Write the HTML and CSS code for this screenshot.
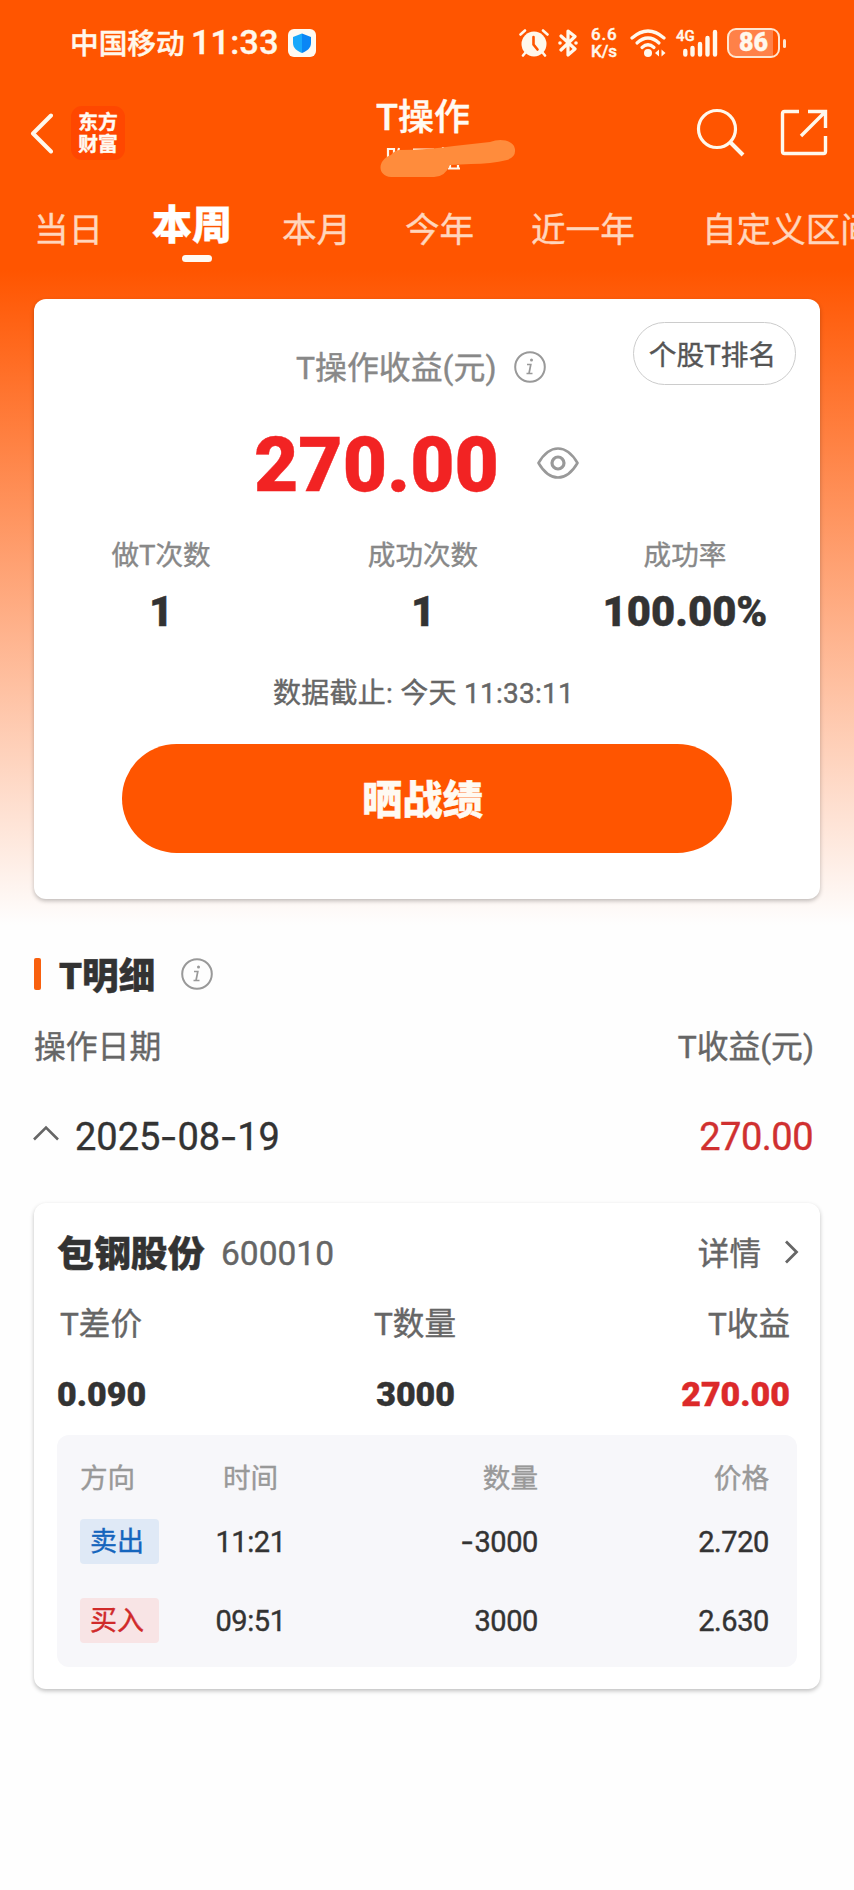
FILE: index.html
```html
<!DOCTYPE html>
<html lang="zh-CN">
<head>
<meta charset="utf-8">
<title>T操作</title>
<link rel="stylesheet" href="styles.css">
</head>
<body>
<div class="page">
  <div class="status">
    <span class="carrier">中国移动</span>
    <span class="clock">11:33</span>
    <svg class="shield" width="28" height="28" viewBox="0 0 28 28"><rect width="28" height="28" rx="6" fill="#fffaf2"/><path d="M14 4.500 23 8v6c0 5-4 8-9 10z" fill="#0a86f5"/><path d="M14 4.500 5 8v6c0 5 4 8 9 10z" fill="#18a8fb"/></svg>
    <div class="status-right">
      <svg class="alarm" width="30" height="28" viewBox="0 0 30 28"><circle cx="15" cy="15" r="12.500" fill="#fff8ec"/><g stroke="#fff8ec" stroke-width="2.600" stroke-linecap="round" fill="none"><path d="M1.500 5.500 6 1.500M28.500 5.500 24 1.500M6.500 23.500 4 26.500M23.500 23.500 26 26.500"/></g><path d="M14.500 8v7.500l4 5" stroke="#ff5500" stroke-width="2.600" fill="none" stroke-linecap="round"/></svg>
      <svg class="bt" width="20" height="28" viewBox="0 0 20 28"><path d="M3 7 17 20 10 26V2l7 5.500L3 21" fill="none" stroke="#fff8ec" stroke-width="3.200" stroke-linejoin="round" stroke-linecap="round"/><circle cx="2" cy="14" r="1.800" fill="#fff8ec"/><circle cx="18" cy="14" r="1.800" fill="#fff8ec"/></svg>
      <div class="speed"><span class="rate">6.6</span><span>K/s</span></div>
      <svg class="wifi" width="37" height="28" viewBox="0 0 37 28"><g fill="none" stroke="#fff8ec" stroke-width="3.200" stroke-linecap="round"><path d="M2 9Q18 -5 34 9"/><path d="M7 14Q18 4 29 14"/><path d="M12 18.500Q18 13 24 18.500"/></g><circle cx="18" cy="24" r="4" fill="#fff8ec"/><path d="M29 20.500v7l-4-3.500zM31.500 20.500v7l4-3.500z" fill="#fff8ec"/></svg>
      <div class="signal"><span class="net">4G</span><svg width="35" height="28" viewBox="0 0 35 28"><g stroke="#fff8ec" stroke-width="4.400" stroke-linecap="round"><path d="M2.300 22v3.500M9.500 19v6.500M17 15v10.500M24.500 9v16.500M32 3v22.500"/></g></svg></div>
      <div class="battery"><span>86</span></div><i class="nub"></i>
    </div>
  </div>

  <div class="nav">
    <svg class="back" width="24" height="44" viewBox="0 0 24 44"><path d="M22 4.500 4 22.500 22 40.500" fill="none" stroke="#fff8ec" stroke-width="4" stroke-linecap="round" stroke-linejoin="round"/></svg>
    <div class="logo"><span>东方</span><span>财富</span></div>
    <div class="heading">
      <div class="title">T操作</div>
      <svg class="smudge" width="145" height="40" viewBox="0 0 145 40"><path d="M12 16V8h6v6M21 14l2-7M37 8.500h21M67 6v4M72 27.500h12M74 27v-3M82 27v-3" stroke="#fff8ec" stroke-width="2.200" fill="none"/><path d="M15 36C1 35 1 19 15 14Q19 9 24 9Q50 9 78 5L114 1C124-3 134-1 138 5Q142 15 131 19Q115 23 95 23L74 24Q69 36 58 36Z" fill="#ff8c3c"/></svg>
    </div>
    <svg class="search" width="50" height="50" viewBox="0 0 50 50"><circle cx="21" cy="21" r="18.500" fill="none" stroke="#fff8ec" stroke-width="3.200"/><path d="M34 34 47 47" stroke="#fff8ec" stroke-width="4"/></svg>
    <svg class="share" width="48" height="48" viewBox="0 0 48 48"><path d="M19 2.500H4.500q-2 0-2 2v38q0 2 2 2h39q2 0 2-2V27M28 2.500H45.500V19M45 3 21 27" fill="none" stroke="#fff8ec" stroke-width="3.400"/></svg>
  </div>

  <div class="tabs">
    <span class="tab">当日</span>
    <span class="tab active">本周</span>
    <span class="tab t3">本月</span>
    <span class="tab t4">今年</span>
    <span class="tab t5">近一年</span>
    <span class="tab t6">自定义区间</span>
  </div>

  <div class="card summary">
    <div class="rank">个股T排名</div>
    <div class="sum-title"><span>T操作收益(元)</span><svg width="32" height="32" viewBox="0 0 32 32"><circle cx="16" cy="16" r="14.800" fill="none" stroke="#999" stroke-width="2"/><circle cx="17.500" cy="9" r="1.500" fill="#999"/><path d="M13 13.500h3.800L15 22.500h3.500M12.500 22.500H16" fill="none" stroke="#999" stroke-width="1.700"/></svg></div>
    <div class="amount"><span>270.00</span><svg width="42" height="32" viewBox="0 0 42 32"><path d="M1.500 16Q10 1.500 21 1.500T40.500 16Q32 30.500 21 30.500T1.500 16Z" fill="none" stroke="#999" stroke-width="2.600" stroke-linejoin="round"/><circle cx="21" cy="16" r="6" fill="none" stroke="#999" stroke-width="3.200"/></svg></div>
    <div class="stats">
      <div><span class="k">做T次数</span><span class="v">1</span></div>
      <div><span class="k">成功次数</span><span class="v">1</span></div>
      <div><span class="k">成功率</span><span class="v">100.00%</span></div>
    </div>
    <div class="asof">数据截止: 今天 11:33:11</div>
    <div class="button">晒战绩</div>
  </div>

  <div class="section-head"><i></i><span>T明细</span><svg width="32" height="32" viewBox="0 0 32 32"><circle cx="16" cy="16" r="14.800" fill="none" stroke="#999" stroke-width="2"/><circle cx="17.500" cy="9" r="1.500" fill="#999"/><path d="M13 13.500h3.800L15 22.500h3.500M12.500 22.500H16" fill="none" stroke="#999" stroke-width="1.700"/></svg></div>
  <div class="cols"><span>操作日期</span><span>T收益(元)</span></div>
  <div class="day"><svg width="26" height="16" viewBox="0 0 26 16"><path d="M1 14.500 13 2.500 25 14.500" fill="none" stroke="#666" stroke-width="2.600"/></svg><span class="date">2025<b>-</b>08<b>-</b>19</span><span class="profit">270.00</span></div>

  <div class="card detail">
    <div class="stock"><span class="name">包钢股份</span><span class="code">600010</span><span class="more">详情</span><svg width="16" height="26" viewBox="0 0 16 26"><path d="M3 2.500 13.500 13 3 23.500" fill="none" stroke="#666" stroke-width="2.800"/></svg></div>
    <div class="trio keys"><span>T差价</span><span>T数量</span><span>T收益</span></div>
    <div class="trio vals"><span>0.090</span><span>3000</span><span class="red">270.00</span></div>
    <div class="trades">
      <div class="row head"><span>方向</span><span>时间</span><span>数量</span><span>价格</span></div>
      <div class="row"><span><em class="sell">卖出</em></span><span>11:21</span><span><b>-</b>3000</span><span>2.720</span></div>
      <div class="row"><span><em class="buy">买入</em></span><span>09:51</span><span>3000</span><span>2.630</span></div>
    </div>
  </div>
</div>
</body>
</html>
```
FILE: styles.css
```css
* { box-sizing: border-box; }
body {
  margin: 0;
  font-family: Roboto, "Noto Sans CJK SC", sans-serif;
  color: #333;
  background: #fefefe;
  -webkit-text-stroke: .4px currentColor;
}
svg { display: block; flex: none; -webkit-text-stroke: 0; }
.page {
  width: 854px;
  height: 1890px;
  overflow: hidden;
  background: linear-gradient(#ff5500 270px, #fefefe 925px);
}
.status {
  display: flex;
  align-items: center;
  height: 86px;
  padding-left: 70px;
  color: #fff8ec;
}
.carrier { width: 121px; padding-bottom: 3px; font-size: 28.7px; font-weight: 500; }
.clock { width: 97px; padding-bottom: 2px; font-size: 34px; font-weight: 500; letter-spacing: .3px; }
.status-right { display: flex; align-items: center; margin-left: 203px; }
.bt { margin-left: 9px; }
.speed {
  display: flex;
  flex-direction: column;
  width: 29px;
  margin-left: 13px;
  font-size: 17px;
  line-height: 17px;
  font-weight: 500;
}
.rate { letter-spacing: .8px; }
.wifi { margin-left: 10px; }
.signal { display: flex; position: relative; width: 42px; margin-left: 9px; justify-content: flex-end; }
.net { position: absolute; left: 0; top: 0; font-size: 15px; line-height: 15px; font-weight: 500; }
.battery {
  width: 53px;
  height: 30px;
  margin-left: 9px;
  border: 2px solid #ffe6d0;
  border-radius: 9px;
  background: linear-gradient(90deg, #ff8148 44px, #ff5500 44px);
  font-size: 25px;
  line-height: 26px;
  font-weight: 900;
  text-align: center;
}
.nub { width: 3px; height: 9px; margin-left: 3px; border-radius: 2px; background: #ffe6d0; }

.nav { display: flex; height: 104px; padding-left: 29px; color: #fffaf2; }
.back { margin-top: 25px; }
.logo {
  display: flex;
  flex-direction: column;
  width: 54px;
  height: 54px;
  margin: 20px 0 0 18px;
  padding-top: 4px;
  border-radius: 11px;
  background: #ff4700;
  font: 700 19.8px/22px "Noto Sans CJK SC", sans-serif;
  text-align: center;
}
.heading { display: flex; flex-direction: column; width: 145px; margin-left: 251px; }
.title { height: 50px; margin-top: 5px; font-size: 36px; line-height: 54px; font-weight: 500; white-space: nowrap; }
.smudge { overflow: visible; }
.search { margin: 22px 0 0 175px; }
.share { margin: 23px 0 0 34px; }

.tabs { display: flex; height: 109px; padding-left: 34px; white-space: nowrap; }
.tab { width: 118px; flex: none; font-size: 34.6px; line-height: 80px; color: #ffd6bd; }
.tab.active { width: 130px; font-size: 40px; line-height: 72px; font-weight: 900; color: #fff; }
.tab.active::after { content: ""; display: block; width: 30px; height: 7px; margin: -7px 0 0 30px; border-radius: 4px; background: #fffaf2; }
.t3 { width: 123px; }
.t4 { width: 126px; }
.t5 { width: 171px; }

.card {
  width: 786px;
  margin-left: 34px;
  border-radius: 12px;
  background: #fff;
  box-shadow: 0 2px 4px rgba(0, 0, 0, .25);
}
.summary { position: relative; height: 600px; padding-top: 40px; }
.rank {
  position: absolute;
  right: 24px;
  top: 23px;
  width: 163px;
  height: 63px;
  padding-right: 4px;
  border: 1px solid #ccc;
  border-radius: 32px;
  font-size: 27.7px;
  line-height: 65px;
  text-align: center;
  color: #555;
}
.sum-title { display: flex; align-items: center; height: 52px; padding-left: 262px; font-size: 31.9px; color: #888; }
.sum-title svg { margin: 3px 0 0 17px; }
.amount { display: flex; align-items: center; height: 144px; padding-left: 220px; font-size: 76.5px; font-weight: 900; color: #f22323; }
.amount span { width: 283px; padding-top: 4px; }
.stats { display: grid; grid-template-columns: repeat(3, 1fr); margin: 0 4px 0 -4px; }
.stats div { display: flex; flex-direction: column; align-items: center; }
.k { font-size: 27.6px; line-height: 42px; color: #888; }
.v { font-size: 41.8px; line-height: 70px; font-weight: 900; }
.asof { margin-top: 22px; height: 48px; padding-left: 239px; font-size: 28px; line-height: 49px; letter-spacing: .25px; color: #666; }
.button {
  width: 610px;
  height: 109px;
  margin: 27px 0 0 88px;
  padding-right: 9px;
  border-radius: 55px;
  background: #ff5500;
  color: #fffaf2;
  font-size: 40.3px;
  line-height: 113px;
  font-weight: 900;
  text-align: center;
}

.section-head { display: flex; align-items: center; height: 52px; margin-top: 49px; padding-left: 34px; font-size: 36.6px; font-weight: 900; }
.section-head i { width: 7px; height: 32px; border-radius: 2px; background: #f8600e; }
.section-head span { width: 122px; margin-left: 18px; padding-bottom: 2px; }
.cols { display: flex; justify-content: space-between; height: 90px; padding: 0 40px 0 34px; font-size: 31.8px; line-height: 95px; color: #666; }
.day { display: flex; align-items: center; height: 90px; padding: 0 41px 0 33px; font-size: 38px; line-height: 90px; }
.day svg { margin-bottom: 5px; }
.date { margin-left: 16px; padding-top: 4px; }
.date b { display: inline-block; width: 17px; font-weight: 400; text-align: center; transform: scaleX(1.35); }
.profit { margin-left: auto; padding-top: 4px; letter-spacing: -.5px; color: #d03030; }

.detail { height: 486px; margin-top: 23px; padding: 14px 23px 0; }
.stock { display: flex; align-items: center; height: 70px; }
.name { width: 164px; padding-bottom: 2px; font-size: 36.9px; font-weight: 900; white-space: nowrap; }
.code { padding-top: 2px; font-size: 33.5px; color: #666; }
.more { margin-left: auto; padding-bottom: 2px; font-size: 31.6px; color: #666; }
.stock svg { margin: 0 -2px 0 22px; }
.trio { display: grid; grid-template-columns: 200px 270px 1fr; padding-right: 7px; white-space: nowrap; }
.trio span:nth-child(n+2) { text-align: right; }
.trio span:nth-child(2) { padding-right: 72px; }
.keys { height: 70px; padding-left: 3px; font-size: 31.6px; line-height: 76px; color: #666; }
.keys span:nth-child(2) { padding-right: 74px; }
.vals { height: 78px; font-size: 34px; line-height: 74px; font-weight: 900; }
.red { color: #dc2a2a; }
.trades { height: 232px; border-radius: 12px; background: #f7f7fa; }
.row { display: grid; grid-template-columns: 114px 113px 231px 231px; align-items: center; height: 79px; padding-left: 23px; font-size: 29px; letter-spacing: -.4px; }
.row.head { height: 67px; padding-top: 15px; font-size: 27.6px; letter-spacing: 0; color: #999; }
.row span:nth-child(2) { text-align: center; }
.row span:nth-child(n+3) { text-align: right; }
.row b { display: inline-block; width: 14px; font-weight: 400; text-align: center; transform: scaleX(1.35); }
.row em { display: block; width: 79px; height: 45px; padding-right: 5px; border-radius: 4px; font-style: normal; font-size: 27px; line-height: 47px; letter-spacing: 0; text-align: center; }
.sell { background: #dfe9f6; color: #1565bd; }
.buy { background: #f8e4e5; color: #d02a2a; }
```
